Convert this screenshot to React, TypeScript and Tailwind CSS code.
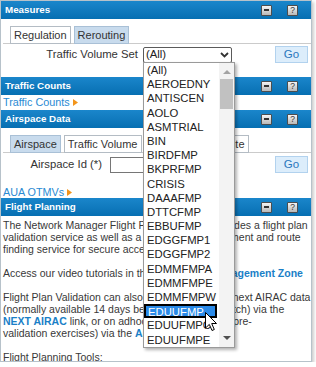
import React from 'react';

const items = [
  '(All)', 'AEROEDNY', 'ANTISCEN', 'AOLO', 'ASMTRIAL', 'BIN', 'BIRDFMP', 'BKPRFMP', 'CRISIS',
  'DAAAFMP', 'DTTCFMP', 'EBBUFMP', 'EDGGFMP1', 'EDGGFMP2', 'EDMMFMPA', 'EDMMFMPE', 'EDMMFMPW',
  'EDUUFMP', 'EDUUFMPC', 'EDUUFMPE',
];

const HeaderButtons = () => (
  <div className="flex items-center gap-[15px]">
    <span className="w-[11px] h-[11px] border border-[#4d4d4d] rounded-[1px] bg-gradient-to-b from-[#f4f4f4] to-[#b9b9b9] flex items-center justify-center">
      <span className="w-[5px] h-[1.5px] bg-[#333]" />
    </span>
    <span className="w-[11px] h-[11px] border border-[#4d4d4d] rounded-[1px] bg-gradient-to-b from-[#f4f4f4] to-[#b9b9b9] flex items-center justify-center text-[8.5px] leading-none text-[#333]">
      ?
    </span>
  </div>
);

const Header: React.FC<{ title: string }> = ({ title }) => (
  <div className="h-[18px] bg-gradient-to-b from-[#1a86cb] to-[#066fb2] flex items-center justify-between pl-[4px] pr-[13px]">
    <span className="text-white font-bold text-[9.8px]">{title}</span>
    <HeaderButtons />
  </div>
);

const Tab: React.FC<{ label: string; active?: boolean; wide?: boolean }> = ({ label, active, wide }) => (
  <div
    className={
      (active
        ? 'h-[18px] px-[3px] border border-[#b4bcc4] bg-white flex items-center text-[11px] text-[#333] -mb-px'
        : 'h-[18px] px-[3px] border border-[#a9c0d6] bg-[#c8dbed] flex items-center text-[11px] text-[#333] -mb-px') +
      (wide ? ' w-[104px] justify-end' : '')
    }
  >
    {label}
  </div>
);

const GoButton = () => (
  <button className="w-[33px] h-[17px] border border-[#b2d2ee] bg-[#dcedfb] text-[#2a78bd] text-[11.5px] flex items-center justify-center">
    Go
  </button>
);

const Link: React.FC<{ label: string }> = ({ label }) => (
  <div className="flex items-center gap-[3px] text-[10.8px] text-[#2a8ad3]">
    <span>{label}</span>
    <svg width="5" height="7" viewBox="0 0 5 7">
      <path d="M0 0 L5 3.5 L0 7 Z" fill="#f3951b" />
    </svg>
  </div>
);

const Dropdown = () => (
  <div className="absolute left-[142px] top-[61px] w-[92px] h-[286px] border border-[#9a9a9a] bg-white shadow-[2px_2px_3px_rgba(0,0,0,0.3)] flex">
    <div className="flex-1 flex flex-col">
      {items.map((it) => (
        <div
          key={it}
          className={
            it === 'EDUUFMP'
              ? 'h-[14.2px] leading-[12px] pl-[2px] text-[11.3px] bg-[#2a8ae8] text-white border-2 border-black mr-[2px]'
              : 'h-[14.2px] leading-[14.2px] pl-[3px] text-[11.3px] text-[#222]'
          }
        >
          {it}
        </div>
      ))}
    </div>
    <div className="w-[15px] bg-[#f3f3f3] flex flex-col items-center pt-[7px] pb-[7px]">
      <svg width="8" height="4" viewBox="0 0 8 4">
        <path d="M0 4 L4 0 L8 4 Z" fill="#a3a3a3" />
      </svg>
      <div className="w-[13px] h-[30px] bg-[#c1c1c1] mt-[5px]" />
      <div className="flex-1" />
      <svg width="8" height="4" viewBox="0 0 8 4">
        <path d="M0 0 L8 0 L4 4 Z" fill="#505050" />
      </svg>
    </div>
  </div>
);

export default function App() {
  return (
    <div className="font-['Liberation_Sans',Arial,sans-serif] relative w-[312px] h-[362px] border border-[#b7c2ca] bg-white overflow-hidden shadow-[2px_2px_3px_rgba(0,0,0,0.2)]">
      <Header title="Measures" />
      <div className="pt-[7px] pb-[14px]">
        <div className="flex gap-[3px] pl-[7px] ml-[2px] border-b border-[#cbcbcb]">
          <Tab label="Regulation" active />
          <Tab label="Rerouting" />
        </div>
        <div className="flex items-center mt-[2px] h-[17px]">
          <span className="w-[137px] text-right text-[11.3px] text-[#333]">Traffic Volume Set</span>
          <div className="ml-[5px] w-[89px] h-[16px] border border-[#5a5a5a] rounded-[2px] flex items-center justify-between pl-[2px] pr-[2px] text-[11.3px] text-[#222]">
            <span>(All)</span>
            <svg width="9" height="6" viewBox="0 0 9 6">
              <path d="M1 1 L4.5 4.5 L8 1" stroke="#333" strokeWidth="1.8" fill="none" />
            </svg>
          </div>
          <div className="ml-auto mr-[3px]">
            <GoButton />
          </div>
        </div>
      </div>

      <Header title="Traffic Counts" />
      <div className="h-[15px] pl-[2px] flex items-center">
        <Link label="Traffic Counts" />
      </div>

      <Header title="Airspace Data" />
      <div className="pt-[7px]">
        <div className="flex gap-[3px] pl-[7px] ml-[2px] border-b border-[#cbcbcb]">
          <Tab label="Airspace" />
          <Tab label="Traffic Volume" active />
          <Tab label="Conditional Route" active wide />
        </div>
        <div className="flex items-center mt-[3px] h-[17px]">
          <span className="w-[101px] text-right text-[11.3px] text-[#333]">Airspace Id (*)</span>
          <div className="ml-[8px] w-[120px] h-[16px] border border-[#767676]" />
          <div className="ml-auto mr-[3px]">
            <GoButton />
          </div>
        </div>
        <div className="mt-[13px] h-[12px] pl-[2px] flex items-center">
          <Link label="AUA OTMVs" />
        </div>
      </div>

      <Header title="Flight Planning" />
      <div className="pt-[3px] px-[2px] text-[10.5px] leading-[12px] text-[#383838] whitespace-nowrap">
        <p>The Network Manager Flight Planning portal provides a flight plan</p>
        <p>validation service as well as a flight plan management and route</p>
        <p>finding service for secure access.</p>
        <p className="h-[12px]" />
        <p>
          Access our video tutorials in the <b className="text-[#1a7fc7]">Flight Plan Management Zone</b>
        </p>
        <p className="h-[12px]" />
        <p>Flight Plan Validation can also be run against the next AIRAC data</p>
        <p>(normally available 14 days before the AIRAC switch) via the</p>
        <p>
          <b className="text-[#1a7fc7]">NEXT AIRAC</b> link, or on adhoc basis (e.g. during pre-
        </p>
        <p>
          validation exercises) via the <b className="text-[#1a7fc7]">AIRAC Selection</b>
        </p>
        <p className="h-[12px]" />
        <p>Flight Planning Tools:</p>
      </div>

      <Dropdown />

      <svg className="absolute left-[204px] top-[311px]" width="13" height="20" viewBox="0 0 13 20">
        <path d="M0.5 0.5 L0.5 16 L4.3 12.4 L7 18.5 L9.3 17.5 L6.7 11.5 L11.5 11.5 Z" fill="white" stroke="black" strokeWidth="1" />
      </svg>
    </div>
  );
}
